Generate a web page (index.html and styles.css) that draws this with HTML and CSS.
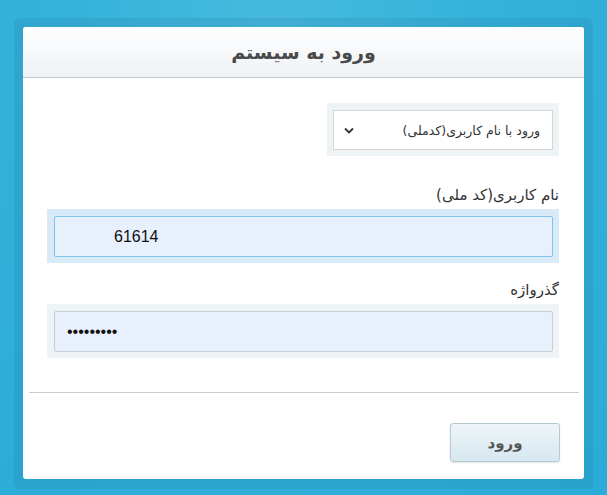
FILE: index.html
```html
<!DOCTYPE html>
<html lang="fa" dir="rtl">
<head>
  <meta charset="UTF-8" />
  <title>ورود به سیستم</title>
  <link rel="stylesheet" href="styles.css">
</head>
<body>
  <div class="frame">
    <div class="panel">
      <div class="header">ورود به سیستم</div>

      <div class="content">
        <div class="select-wrap">
          <div class="select">
            <span>ورود با نام کاربری(کدملی)</span>
            <svg class="chev" width="10" height="7" viewBox="0 0 10 7"><path d="M1 1.5 L5 5.5 L9 1.5" fill="none" stroke="#333" stroke-width="1.8"/></svg>
          </div>
        </div>

        <label class="label">نام کاربری(کد ملی)</label>
        <div class="field-wrap active">
          <div class="input user">61614</div>
        </div>

        <label class="label pass-label">گذرواژه</label>
        <div class="field-wrap">
          <div class="input pass">•••••••••</div>
        </div>
      </div>

      <div class="divider"></div>

      <div class="actions">
        <button class="btn">ورود</button>
      </div>
    </div>
  </div>
</body>
</html>
```

FILE: styles.css
```css
body {
  margin: 0;
  height: 495px;
  overflow: hidden;
  font-family: "DejaVu Sans", sans-serif;
  background: radial-gradient(ellipse at 45% 0%, #46bade 0%, #35b2db 45%, #29acd7 100%);
}
.frame {
  margin: 18px 14px 0 14px;
  padding: 9px 9px 10px 9px;
  border-radius: 6px;
  background: rgba(30, 90, 130, 0.13);
}
.panel {
  background: #fff;
  border-radius: 3px;
  height: 452px;
}
.header {
  height: 50px;
  line-height: 50px;
  text-align: center;
  font-size: 19px;
  font-weight: bold;
  color: #4a4a4a;
  background: linear-gradient(#ffffff, #eef2f5);
  border-bottom: 1px solid #c9c9c9;
  border-radius: 3px 3px 0 0;
}
.content {
  padding: 25px 25px 0 24px;
}
.select-wrap {
  width: 220px;
  padding: 7px 6px 6px 6px;
  background: #eef3f6;
}
.select {
  height: 38px;
  border: 1px solid #d6d6d6;
  background: #fff;
  display: flex;
  align-items: center;
  justify-content: space-between;
  padding: 0 12px 0 10px;
  font-size: 12.5px;
  color: #333;
}
.label {
  display: block;
  margin-top: 29px;
  margin-bottom: 4px;
  font-size: 15px;
  color: #333;
  line-height: 20px;
}
.pass-label {
  margin-top: 17px;
}
.field-wrap {
  padding: 7px 6px 6px 7px;
  background: #eef3f6;
}
.field-wrap.active {
  background: #d8eaf7;
}
.input {
  height: 39px;
  border: 1px solid #c9ced3;
  border-radius: 2px;
  background: #e8f0fe;
  direction: ltr;
  display: flex;
  align-items: center;
  font-family: "Liberation Sans", Arial, sans-serif;
  color: #111;
}
.input.user {
  border-color: #7cc6e6;
  padding-left: 59px;
  font-size: 16px;
}
.input.pass {
  padding-left: 12px;
  font-size: 16px;
}
.divider {
  margin: 34px 5px 0 6px;
  border-top: 1px solid #cccccc;
}
.actions {
  padding: 30px 24px 0 0;
}
.btn {
  width: 110px;
  height: 39px;
  border: 1px solid #b8c8d0;
  border-radius: 3px;
  background: linear-gradient(#eef5f9, #d6e8ef);
  font-family: "DejaVu Sans", sans-serif;
  font-weight: bold;
  font-size: 15px;
  color: #555;
  box-shadow: 0 1px 2px rgba(0,0,0,0.1);
}
```
